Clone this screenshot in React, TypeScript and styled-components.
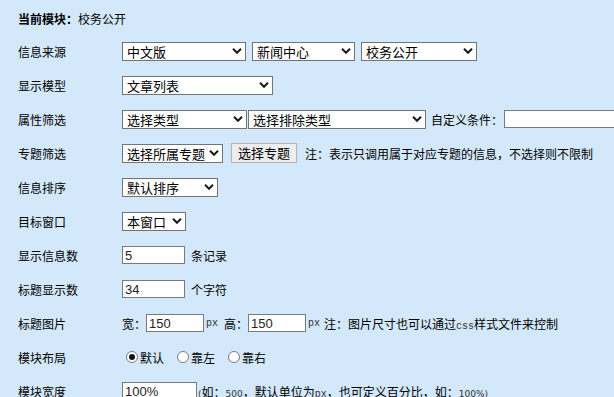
import React from 'react';
import styled, { createGlobalStyle } from 'styled-components';

const GlobalStyle = createGlobalStyle`
  html, body {
    margin: 0;
    padding: 0;
    overflow: hidden;
    background: #d3e8fb;
  }
  body {
    font-family: "Noto Sans CJK SC", "Liberation Sans", sans-serif;
    font-size: 12px;
    color: #000;
  }
`;

const Page = styled.div`
  width: 614px;
  height: 397px;
  padding: 9px 0 0 18px;
  box-sizing: border-box;
  background: #d3e8fb;
`;

const Header = styled.div`
  height: 20px;
  line-height: 20px;
  margin-bottom: 5px;
  white-space: nowrap;
`;

const HeaderLabel = styled.b`
  font-weight: 700;
`;

const Row = styled.div`
  display: flex;
  align-items: center;
  height: 34px;
  white-space: nowrap;
`;

const Label = styled.span`
  width: 104px;
  flex-shrink: 0;
`;

const Field = styled.div<{ $gap?: number }>`
  display: flex;
  align-items: center;
  gap: ${(p) => p.$gap ?? 6}px;
`;

const SelectWrap = styled.span<{ $w: number }>`
  position: relative;
  display: inline-flex;
  width: ${(p) => p.$w}px;
  height: 19px;
  flex-shrink: 0;
`;

const NativeSelect = styled.select`
  appearance: none;
  -webkit-appearance: none;
  width: 100%;
  height: 100%;
  margin: 0;
  padding: 0 16px 0 4px;
  border: 1px solid #737373;
  border-radius: 0;
  background: #fff;
  font-family: "Noto Sans CJK SC", sans-serif;
  font-size: 13px;
  line-height: 17px;
  color: #000;
  outline: none;
`;

const Chevron = styled.svg`
  position: absolute;
  right: 4px;
  top: 50%;
  margin-top: -3px;
  pointer-events: none;
`;

const TextInput = styled.input<{ $w: number }>`
  width: ${(p) => p.$w}px;
  height: 18px;
  box-sizing: border-box;
  margin: 0;
  padding: 0 2px;
  border: 1px solid #7a7a7a;
  border-radius: 0;
  background: #fff;
  font-family: "Liberation Sans", Arial, sans-serif;
  font-size: 13px;
  color: #222;
  outline: none;
  flex-shrink: 0;
`;

const PlainButton = styled.button`
  height: 20px;
  margin: 0 0 0 2px;
  padding: 0 6px;
  border: 1px solid #b4b4b4;
  border-radius: 0;
  background: #ededed;
  font-family: "Noto Sans CJK SC", sans-serif;
  font-size: 13px;
  line-height: 18px;
  color: #000;
`;

const Unit = styled.span`
  font-family: "Liberation Mono", monospace;
  font-size: 10px;
  color: #333;
`;

const Small = styled.span`
  font-family: "DejaVu Sans", sans-serif;
  font-size: 9px;
  color: #333;
`;

const Note = styled.span<{ $ml?: number }>`
  margin-left: ${(p) => p.$ml ?? 2}px;
`;

const RadioGroup = styled.div`
  display: flex;
  align-items: center;
  gap: 13px;
  padding-left: 4px;
`;

const RadioLabel = styled.label`
  display: flex;
  align-items: center;
  gap: 2px;
`;

const Radio = styled.input`
  appearance: none;
  -webkit-appearance: none;
  width: 12px;
  height: 12px;
  margin: 0;
  border: 1px solid #7a7a7a;
  border-radius: 50%;
  background: #fff;
  display: grid;
  place-items: center;

  &:checked::after {
    content: '';
    width: 6px;
    height: 6px;
    border-radius: 50%;
    background: #111;
  }
`;

const Select: React.FC<{ width: number; value: string; options?: string[] }> = ({ width, value, options }) => (
  <SelectWrap $w={width}>
    <NativeSelect defaultValue={value}>
      {(options ?? [value]).map((o) => (
        <option key={o} value={o}>
          {o}
        </option>
      ))}
    </NativeSelect>
    <Chevron width="10" height="6" viewBox="0 0 10 6">
      <path d="M1 0.8 L5 4.8 L9 0.8" fill="none" stroke="#1a1a1a" strokeWidth="2" />
    </Chevron>
  </SelectWrap>
);

const App: React.FC = () => {
  return (
    <>
      <GlobalStyle />
      <Page>
        <Header>
          <HeaderLabel>当前模块：</HeaderLabel>校务公开
        </Header>

        <Row>
          <Label>信息来源</Label>
          <Field>
            <Select width={124} value="中文版" />
            <Select width={103} value="新闻中心" />
            <Select width={116} value="校务公开" />
          </Field>
        </Row>

        <Row>
          <Label>显示模型</Label>
          <Select width={151} value="文章列表" />
        </Row>

        <Row>
          <Label>属性筛选</Label>
          <Field $gap={1}>
            <Select width={125} value="选择类型" />
            <Select width={178} value="选择排除类型" />
            <Note $ml={4}>自定义条件：</Note>
            <TextInput $w={130} />
          </Field>
        </Row>

        <Row>
          <Label>专题筛选</Label>
          <Field $gap={6}>
            <Select width={101} value="选择所属专题" />
            <PlainButton type="button">选择专题</PlainButton>
            <Note>注：表示只调用属于对应专题的信息，不选择则不限制</Note>
          </Field>
        </Row>

        <Row>
          <Label>信息排序</Label>
          <Select width={96} value="默认排序" />
        </Row>

        <Row>
          <Label>目标窗口</Label>
          <Select width={64} value="本窗口" />
        </Row>

        <Row>
          <Label>显示信息数</Label>
          <Field>
            <TextInput $w={63} defaultValue="5" />
            <span>条记录</span>
          </Field>
        </Row>

        <Row>
          <Label>标题显示数</Label>
          <Field>
            <TextInput $w={63} defaultValue="34" />
            <span>个字符</span>
          </Field>
        </Row>

        <Row>
          <Label>标题图片</Label>
          <Field $gap={0}>
            <span>宽：</span>
            <TextInput $w={58} defaultValue="150" />
            <Unit style={{ margin: '0 6px 0 2px' }}>px</Unit>
            <span>高：</span>
            <TextInput $w={58} defaultValue="150" />
            <Unit style={{ margin: '0 4px 0 2px' }}>px</Unit>
            <span>
              注：图片尺寸也可以通过<Unit>css</Unit>样式文件来控制
            </span>
          </Field>
        </Row>

        <Row>
          <Label>模块布局</Label>
          <RadioGroup>
            <RadioLabel>
              <Radio type="radio" name="layout" defaultChecked />
              默认
            </RadioLabel>
            <RadioLabel>
              <Radio type="radio" name="layout" />
              靠左
            </RadioLabel>
            <RadioLabel>
              <Radio type="radio" name="layout" />
              靠右
            </RadioLabel>
          </RadioGroup>
        </Row>

        <Row>
          <Label>模块宽度</Label>
          <Field $gap={1}>
            <TextInput $w={75} defaultValue="100%" />
            <span>
              <Small>(</Small>如：<Small>500</Small>，默认单位为<Unit>px</Unit>，也可定义百分比，如：
              <Small>100%)</Small>
            </span>
          </Field>
        </Row>
      </Page>
    </>
  );
};

export default App;
